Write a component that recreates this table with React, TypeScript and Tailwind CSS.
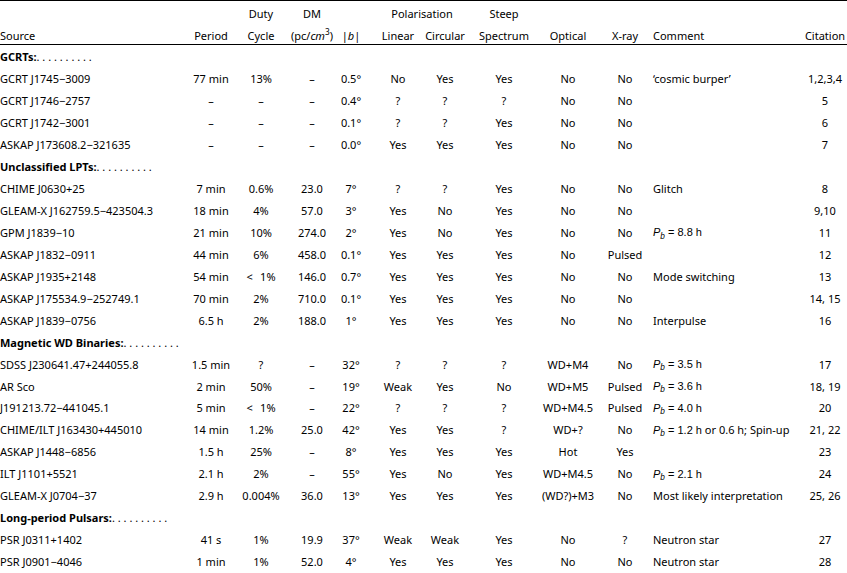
import React from "react";

type Row = (string | React.ReactNode)[];

const GRID =
  "grid grid-cols-[197px_28px_72px_30px_48px_46px_48px_70px_58px_56px_152px_40px]";

const Pb = ({ v, rest }: { v: string; rest?: string }) => (
  <span>
    <span className="font-['Liberation_Sans',Arial,sans-serif]">
      <i>P</i>
      <sub className="italic">b</sub> = {v} h
    </span>
    {rest ? <span>{rest}</span> : null}
  </span>
);

const LT = "<\u2002\u20091%";

const sections: { title: string; rows: Row[] }[] = [
  {
    title: "GCRTs:",
    rows: [
      ["GCRT J1745−3009", "77 min", "13%", "–", "0.5°", "No", "Yes", "Yes", "No", "No", "‘cosmic burper’", "1,2,3,4"],
      ["GCRT J1746−2757", "–", "–", "–", "0.4°", "?", "?", "?", "No", "No", "", "5"],
      ["GCRT J1742−3001", "–", "–", "–", "0.1°", "?", "?", "Yes", "No", "No", "", "6"],
      ["ASKAP J173608.2−321635", "–", "–", "–", "0.0°", "Yes", "Yes", "Yes", "No", "No", "", "7"],
    ],
  },
  {
    title: "Unclassified LPTs:",
    rows: [
      ["CHIME J0630+25", "7 min", "0.6%", "23.0", "7°", "?", "?", "Yes", "No", "No", "Glitch", "8"],
      ["GLEAM-X J162759.5−423504.3", "18 min", "4%", "57.0", "3°", "Yes", "No", "Yes", "No", "No", "", "9,10"],
      ["GPM J1839−10", "21 min", "10%", "274.0", "2°", "Yes", "No", "Yes", "No", "No", <Pb v="8.8" />, "11"],
      ["ASKAP J1832−0911", "44 min", "6%", "458.0", "0.1°", "Yes", "Yes", "Yes", "No", "Pulsed", "", "12"],
      ["ASKAP J1935+2148", "54 min", LT, "146.0", "0.7°", "Yes", "Yes", "Yes", "No", "No", "Mode switching", "13"],
      ["ASKAP J175534.9−252749.1", "70 min", "2%", "710.0", "0.1°", "Yes", "Yes", "Yes", "No", "No", "", "14, 15"],
      ["ASKAP J1839−0756", "6.5 h", "2%", "188.0", "1°", "Yes", "Yes", "Yes", "No", "No", "Interpulse", "16"],
    ],
  },
  {
    title: "Magnetic WD Binaries:",
    rows: [
      ["SDSS J230641.47+244055.8", "1.5 min", "?", "–", "32°", "?", "?", "?", "WD+M4", "No", <Pb v="3.5" />, "17"],
      ["AR Sco", "2 min", "50%", "–", "19°", "Weak", "Yes", "No", "WD+M5", "Pulsed", <Pb v="3.6" />, "18, 19"],
      ["J191213.72−441045.1", "5 min", LT, "–", "22°", "?", "?", "?", "WD+M4.5", "Pulsed", <Pb v="4.0" />, "20"],
      ["CHIME/ILT J163430+445010", "14 min", "1.2%", "25.0", "42°", "Yes", "Yes", "?", "WD+?", "No", <Pb v="1.2" rest=" or 0.6 h; Spin-up" />, "21, 22"],
      ["ASKAP J1448−6856", "1.5 h", "25%", "–", "8°", "Yes", "Yes", "Yes", "Hot", "Yes", "", "23"],
      ["ILT J1101+5521", "2.1 h", "2%", "–", "55°", "Yes", "No", "Yes", "WD+M4.5", "No", <Pb v="2.1" />, "24"],
      ["GLEAM-X J0704−37", "2.9 h", "0.004%", "36.0", "13°", "Yes", "Yes", "Yes", "(WD?)+M3", "No", "Most likely interpretation", "25, 26"],
    ],
  },
  {
    title: "Long-period Pulsars:",
    rows: [
      ["PSR J0311+1402", "41 s", "1%", "19.9", "37°", "Weak", "Weak", "Yes", "No", "?", "Neutron star", "27"],
      ["PSR J0901−4046", "1 min", "1%", "52.0", "4°", "Yes", "Yes", "Yes", "No", "No", "Neutron star", "28"],
    ],
  },
];

const cellBase = "flex items-center whitespace-nowrap leading-[15px]";

function DataRow({ row }: { row: Row }) {
  return (
    <div className={`${GRID} h-[21.94px]`}>
      {row.map((c, i) => {
        const left = i === 0 || i === 10;
        return (
          <div key={i} className={`${cellBase} ${left ? "justify-start" : "justify-center"}`}>
            {c}
          </div>
        );
      })}
    </div>
  );
}

function SectionRow({ title }: { title: string }) {
  return (
    <div className="flex h-[21.94px] items-center whitespace-nowrap leading-[15px]">
      <span className="font-bold">{title}</span>
      <span>. . . . . . . . . .</span>
    </div>
  );
}

export default function App() {
  return (
    <div className="min-h-[573px] w-[847px] bg-white text-[11px] text-black font-['Noto_Sans',sans-serif]">
      <div className="border-t border-black">
        <div className="h-[43px] border-b border-black">
          <div className={`${GRID} mt-[1px] h-[22px]`}>
            <div />
            <div />
            <div className={`${cellBase} justify-center`}>Duty</div>
            <div className={`${cellBase} justify-center`}>DM</div>
            <div />
            <div className={`${cellBase} col-span-2 justify-center`}>Polarisation</div>
            <div className={`${cellBase} justify-center`}>Steep</div>
            <div />
            <div />
            <div />
            <div />
          </div>
          <div className={`${GRID} h-[19px]`}>
            <div className={`${cellBase} justify-start pt-[3px]`}>Source</div>
            <div className={`${cellBase} justify-center pt-[3px]`}>Period</div>
            <div className={`${cellBase} justify-center pt-[3px]`}>Cycle</div>
            <div className={`${cellBase} justify-center pt-[3px]`}>
              <span>
                (pc/<i>cm</i>
                <sup>3</sup>)
              </span>
            </div>
            <div className={`${cellBase} justify-center pt-[3px]`}>
              <span>
                |<i>b</i>|
              </span>
            </div>
            <div className={`${cellBase} justify-center pt-[3px]`}>Linear</div>
            <div className={`${cellBase} justify-center pt-[3px]`}>Circular</div>
            <div className={`${cellBase} justify-center pt-[3px]`}>Spectrum</div>
            <div className={`${cellBase} justify-center pt-[3px]`}>Optical</div>
            <div className={`${cellBase} justify-center pt-[3px]`}>X-ray</div>
            <div className={`${cellBase} justify-start pt-[3px]`}>Comment</div>
            <div className={`${cellBase} justify-center pt-[3px]`}>Citation</div>
          </div>
        </div>
        <div className="border-b border-black pt-[1px] pb-[1px]">
          {sections.map((s) => (
            <React.Fragment key={s.title}>
              <SectionRow title={s.title} />
              {s.rows.map((r, i) => (
                <DataRow key={i} row={r} />
              ))}
            </React.Fragment>
          ))}
        </div>
      </div>
    </div>
  );
}
